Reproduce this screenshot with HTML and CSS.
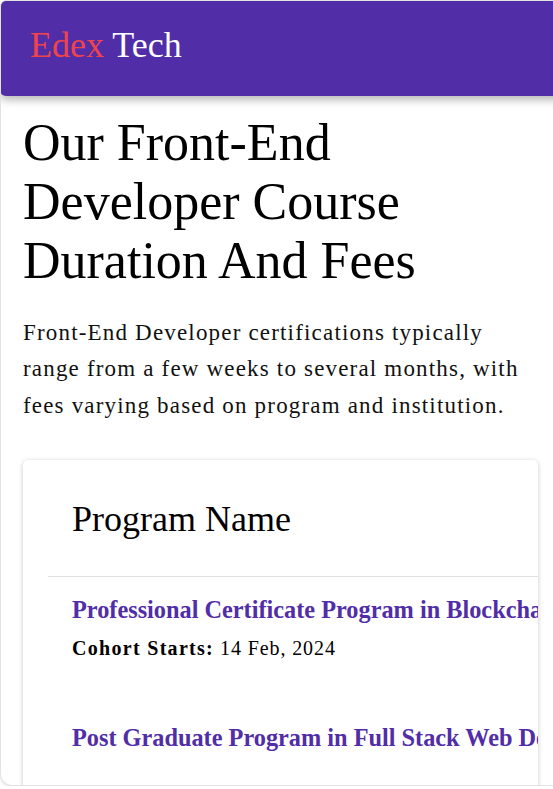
FILE: index.html
```html
<!DOCTYPE html>
<html lang="en">
<head>
<meta charset="utf-8">
<title>Edex Tech</title>
<link rel="stylesheet" href="styles.css">
</head>
<body>
<div class="app">
  <header class="topbar">
    <span class="brand-a">Edex</span> <span class="brand-b">Tech</span>
  </header>
  <main class="main">
    <h1 class="title">Our Front-End Developer Course Duration And Fees</h1>
    <p class="lead">Front-End Developer certifications typically range from a few weeks to several months, with fees varying based on program and institution.</p>
    <div class="card">
      <table class="table">
        <thead>
          <tr><th class="th">Program Name</th><th class="th">Duration</th><th class="th">Fees</th></tr>
        </thead>
        <tbody>
          <tr>
            <td class="td">
              <div class="prog">Professional Certificate Program in Blockchain</div>
              <div class="cohort"><span class="cohort-label">Cohort Starts:</span> 14 Feb, 2024</div>
            </td>
            <td class="td">4 Months</td>
            <td class="td">$ 2,999</td>
          </tr>
          <tr>
            <td class="td">
              <div class="prog">Post Graduate Program in Full Stack Web Development</div>
            </td>
            <td class="td">9 Months</td>
            <td class="td">$ 4,500</td>
          </tr>
        </tbody>
      </table>
    </div>
  </main>
</div>
</body>
</html>
```
FILE: styles.css
```css
html, body {
  margin: 0;
  padding: 0;
  overflow: hidden;
  background: #fff;
}
body {
  font-family: "Liberation Serif", "Times New Roman", serif;
  color: #000;
}
.app {
  width: 640px;
  height: 786px;
  box-sizing: border-box;
  border: 1px solid #e2e2e2;
  border-radius: 6px 12px 12px 12px;
  box-shadow: 0 1px 3px rgba(0,0,0,0.12);
  overflow: hidden;
  background: #fff;
}
.topbar {
  height: 96px;
  box-sizing: border-box;
  margin: -1px -1px 0 -1px;
  padding: 24px 30px 0;
  background: #512da8;
  border-radius: 6px;
  box-shadow: 0 4px 9px rgba(0,0,0,0.28);
  font-size: 36px;
  position: relative;
}
.brand-a { color: #f0444a; }
.brand-b { color: #fff; }
.main {
  width: 553px;
  box-sizing: border-box;
  padding: 0 16px 0 22px;
}
.title {
  margin: 16.5px 0 0;
  font-size: 52px;
  font-weight: normal;
  line-height: normal;
}
.lead {
  margin: 25px 0 0;
  font-size: 23px;
  line-height: 36.7px;
  letter-spacing: 1.18px;
  color: #111;
}
.card {
  margin-top: 35px;
  height: 400px;
  border-radius: 5px;
  box-shadow: 0 1px 5px rgba(0,0,0,0.22);
  overflow: hidden;
  padding: 0 0 0 25px;
  background: #fff;
}
.table {
  border-collapse: collapse;
  white-space: nowrap;
}
.th {
  text-align: left;
  font-weight: normal;
  font-size: 36px;
  padding: 38px 24px 36.5px;
  border-bottom: 1px solid #e0e0e0;
}
.td {
  vertical-align: top;
  padding: 19px 24px 45px;
  font-size: 20px;
}
.prog {
  font-size: 24.3px;
  font-weight: bold;
  color: #512da8;
}
.cohort {
  margin-top: 12.7px;
  font-size: 20px;
  letter-spacing: 0.9px;
}
.cohort-label {
  font-weight: bold;
  letter-spacing: 1.3px;
}
```
